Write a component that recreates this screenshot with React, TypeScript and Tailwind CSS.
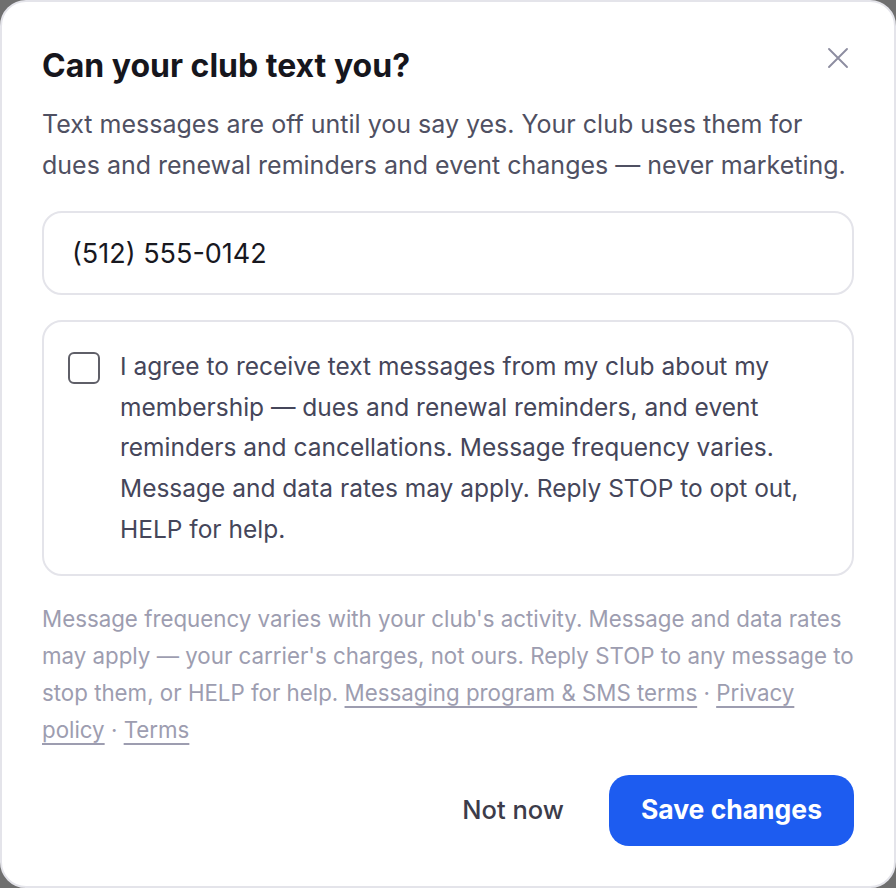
import { useState } from "react";

function CloseIcon() {
  return (
    <svg width="22" height="22" viewBox="0 0 22 22" fill="none" stroke="currentColor" strokeWidth="1.9" strokeLinecap="round">
      <path d="M2 2 L20 20 M20 2 L2 20" />
    </svg>
  );
}

export default function App() {
  const [phone, setPhone] = useState("(512) 555-0142");
  const [agree, setAgree] = useState(false);

  return (
    <div
      className="min-h-[888px] bg-[#6f6f6f]"
      style={{ fontFamily: "Inter, 'Noto Sans', sans-serif" }}
    >
      <div
        role="dialog"
        aria-modal="true"
        className="h-[888px] w-[896px] rounded-[26px] border-2 border-[#e4e4ea] bg-white px-[40px] pt-[45px] pb-[41px]"
      >
        <div className="flex items-start justify-between">
          <h2 className="text-[32px] leading-[38px] font-bold text-[#16161d]">
            Can your club text you?
          </h2>
          <button className="mt-[0px] mr-[5px] text-[#8d8da0]" aria-label="Close">
            <CloseIcon />
          </button>
        </div>

        <p className="mt-[19px] text-[25px] leading-[41px] text-[#4f5062]">
          Text messages are off until you say yes. Your club uses them for dues and renewal
          reminders and event changes — never marketing.
        </p>

        <input
          value={phone}
          onChange={(e) => setPhone(e.target.value)}
          className="mt-[25px] block h-[84px] w-full rounded-[20px] border-2 border-[#e4e4ea] px-[28px] text-[27px] text-[#18181f] outline-none"
        />

        <label className="mt-[25px] flex cursor-pointer gap-5 rounded-[20px] border-2 border-[#e4e4ea] p-6">
          <input
            type="checkbox"
            checked={agree}
            onChange={(e) => setAgree(e.target.checked)}
            className="mt-[6px] h-[32px] w-[32px] shrink-0 appearance-none rounded-[6px] border-2 border-[#5f5f68] bg-white checked:border-[#1d5cf0] checked:bg-[#1d5cf0]"
          />
          <span className="text-[24.5px] leading-[40.7px] text-[#45465a]">
            I agree to receive text messages from my club about my membership — dues and
            renewal reminders, and event reminders and cancellations. Message frequency
            varies. Message and data rates may apply. Reply STOP to opt out, HELP for help.
          </span>
        </label>

        <p className="mt-6 text-[22.3px] leading-[37.3px] text-[#9d9db0]">
          Message frequency varies with your club's activity. Message and data rates may
          apply — your carrier's charges, not ours. Reply STOP to any message to stop them,
          or HELP for help.{" "}
          <a href="#" className="underline underline-offset-[5px]">
            Messaging program &amp; SMS terms
          </a>{" "}
          ·{" "}
          <a href="#" className="underline underline-offset-[5px]">
            Privacy policy
          </a>{" "}
          ·{" "}
          <a href="#" className="underline underline-offset-[5px]">
            Terms
          </a>
        </p>

        <div className="mt-[26px] flex items-center justify-end gap-[21px]">
          <button className="px-6 text-[25.5px] font-medium text-[#3c3c4a]">Not now</button>
          <button className="h-[71px] rounded-[20px] bg-[#1d5cf0] px-8 text-[26.5px] font-bold text-white">
            Save changes
          </button>
        </div>
      </div>
    </div>
  );
}
